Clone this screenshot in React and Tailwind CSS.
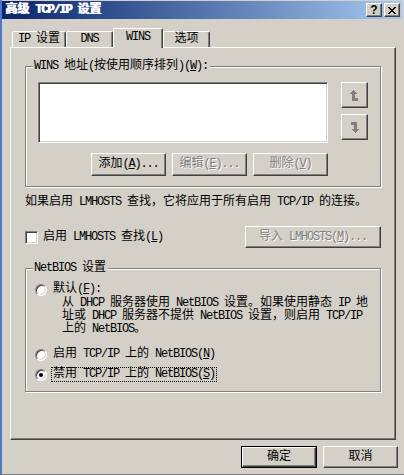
import React from "react";

// text run helper: ASCII runs get squeezed to the 6px half-width cell, "&x" underlines x
function T({ s }) {
  const segs = [];
  for (let i = 0; i < s.length; i++) {
    let c = s[i];
    let u = false;
    if (c === "&" && i + 1 < s.length) {
      c = s[++i];
      u = true;
    }
    const latin = c.charCodeAt(0) < 128;
    const last = segs[segs.length - 1];
    if (last && last.latin === latin && last.u === u) last.text += c;
    else segs.push({ text: c, latin, u });
  }
  return (
    <span className="whitespace-pre">
      {segs.map((g, k) => {
        const el = g.u ? <u className="underline-offset-1">{g.text}</u> : g.text;
        return g.latin ? (
          <span key={k} className="tracking-[-1.2px]">
            {el}
          </span>
        ) : (
          <span key={k}>{el}</span>
        );
      })}
    </span>
  );
}

const raised =
  "border border-t-white border-l-white border-r-[#404040] border-b-[#404040] shadow-[inset_-1px_-1px_0_#808080] bg-[#d4d0c8]";
const sunken =
  "border border-t-[#808080] border-l-[#808080] border-r-white border-b-white shadow-[inset_1px_1px_0_#404040,inset_-1px_-1px_0_#d4d0c8] bg-white";
const disabled = "text-[#808080] [text-shadow:1px_1px_0_#fff]";

function Button({ label, off, className = "" }) {
  return (
    <div
      className={`${raised} flex items-center justify-center whitespace-nowrap ${
        off ? disabled : "text-black"
      } ${className}`}
    >
      <T s={label} />
    </div>
  );
}

function Group({ label, className = "", children }) {
  return (
    <div
      className={`relative border border-[#808080] shadow-[1px_1px_0_#fff,inset_1px_1px_0_#fff] ${className}`}
    >
      <div className="absolute left-[7px] top-[-7px] bg-[#d4d0c8] pl-px pr-[2px] whitespace-nowrap">
        <T s={label} />
      </div>
      {children}
    </div>
  );
}

function Radio({ checked }) {
  return (
    <div className="w-[12px] h-[12px] shrink-0 rounded-full border border-t-[#808080] border-l-[#808080] border-r-white border-b-white shadow-[inset_1px_1px_0_#404040,inset_-1px_-1px_0_#d4d0c8] bg-white flex items-center justify-center">
      {checked && <div className="w-[4px] h-[4px] rounded-full bg-black" />}
    </div>
  );
}

function Arrow({ down }) {
  return (
    <svg
      width="9"
      height="11"
      viewBox="0 0 9 11"
      shapeRendering="crispEdges"
      className={down ? "rotate-180" : ""}
    >
      <g fill="#808080">
        <rect x="3" y="0" width="1" height="1" />
        <rect x="2" y="1" width="3" height="1" />
        <rect x="1" y="2" width="5" height="1" />
        <rect x="0" y="3" width="7" height="1" />
        <rect x="2" y="4" width="3" height="7" />
        <rect x="5" y="8" width="3" height="3" />
      </g>
    </svg>
  );
}

function Tab({ label, active, w }) {
  return (
    <div
      className={`${w} flex items-center justify-center rounded-t-[2px] border border-b-0 border-t-white border-l-white border-r-[#404040] shadow-[inset_-1px_0_0_#808080] bg-[#d4d0c8] ${
        active ? "h-[20px] -mb-px relative z-10 pb-[3px]" : "h-[16px]"
      }`}
    >
      <T s={label} />
    </div>
  );
}

export default function App() {
  return (
    <div className="w-[404px] h-[475px] overflow-hidden bg-[#d4d0c8] border-l-2 border-l-[#4f78c4] border-b border-b-[#808080] text-[12px] leading-[13px] text-black font-['Liberation_Mono','Noto_Sans_CJK_SC',monospace] flex flex-col">
      {/* title bar */}
      <div className="mt-px w-[400px] h-[18px] bg-linear-to-r from-[#0a246a] to-[#a6caf0] flex items-center pl-[3px] pr-[2px]">
        <div className="text-white font-bold whitespace-nowrap [text-shadow:1px_0_0_#fff]">
          <T s="高级 TCP/IP 设置" />
        </div>
        <div className="ml-auto flex gap-[2px]">
          <div className={`${raised} w-[16px] h-[14px] flex items-center justify-center font-bold text-[12px] font-['Liberation_Sans',sans-serif]`}>
            ?
          </div>
          <div className={`${raised} w-[16px] h-[14px] flex items-center justify-center`}>
            <svg width="8" height="7" viewBox="0 0 8 7" shapeRendering="crispEdges">
              <path d="M0 0h2v1h-2zM6 0h2v1h-2zM1 1h2v1h-2zM5 1h2v1h-2zM2 2h4v1h-4zM3 3h2v1h-2zM2 4h4v1h-4zM1 5h2v1h-2zM5 5h2v1h-2zM0 6h2v1h-2zM6 6h2v1h-2z" fill="#000" />
            </svg>
          </div>
        </div>
      </div>

      {/* tabs */}
      <div className="mt-[9px] ml-[10px] h-[19px] flex items-end">
        <Tab label="IP 设置" w="w-[54px]" />
        <Tab label="DNS" w="w-[47px]" />
        <Tab label="WINS" w="w-[50px]" active />
        <Tab label="选项" w="w-[47px]" />
      </div>

      {/* panel */}
      <div className="ml-[8px] w-[386px] h-[393px] border border-t-white border-l-white border-r-[#404040] border-b-[#404040] shadow-[inset_-1px_-1px_0_#808080] px-[14px] pt-[18px] flex flex-col whitespace-nowrap">
        <Group label="WINS 地址(按使用顺序排列)(&W):" className="pt-[15px] pl-[12px] pb-[10px]">
          <div className="flex gap-[13px]">
            <div className={`${sunken} w-[290px] h-[61px]`} />
            <div className="flex flex-col gap-[6px]">
              <div className={`${raised} w-[27px] h-[26px] flex items-center justify-center`}>
                <Arrow />
              </div>
              <div className={`${raised} w-[27px] h-[26px] flex items-center justify-center`}>
                <Arrow down />
              </div>
            </div>
          </div>
          <div className="w-[290px] mt-[10px] flex justify-end gap-[6px]">
            <Button label="添加(&A)..." className="w-[75px] h-[23px]" />
            <Button label="编辑(&E)..." off className="w-[75px] h-[23px]" />
            <Button label="删除(&V)" off className="w-[75px] h-[23px]" />
          </div>
        </Group>

        <div className="mt-[9px]">
          <T s="如果启用 LMHOSTS 查找，它将应用于所有启用 TCP/IP 的连接。" />
        </div>

        <div className="mt-[17px] flex items-center justify-between">
          <div className="flex items-center gap-[5px]">
            <div className={`${sunken} w-[13px] h-[13px]`} />
            <T s="启用 LMHOSTS 查找(&L)" />
          </div>
          <Button label="导入 LMHOSTS(&M)..." off className="w-[136px] h-[22px]" />
        </div>

        <Group label="NetBIOS 设置" className="mt-[20px] pt-[14px] pl-[9px] pb-[9px]">
          <div className="flex items-center gap-[6px]">
            <Radio />
            <T s="默认(&F):" />
          </div>
          <div className="ml-[27px] mt-px">
            <div>
              <T s="从 DHCP 服务器使用 NetBIOS 设置。如果使用静态 IP 地" />
            </div>
            <div>
              <T s="址或 DHCP 服务器不提供 NetBIOS 设置，则启用 TCP/IP" />
            </div>
            <div>
              <T s="上的 NetBIOS。" />
            </div>
          </div>
          <div className="mt-[12px] flex items-center gap-[6px]">
            <Radio />
            <T s="启用 TCP/IP 上的 NetBIOS(&N)" />
          </div>
          <div className="mt-[6px] flex items-center gap-[4px]">
            <Radio checked />
            <div className="border border-dotted border-black px-px">
              <T s="禁用 TCP/IP 上的 NetBIOS(&S)" />
            </div>
          </div>
        </Group>
      </div>

      {/* dialog buttons */}
      <div className="mt-[6px] pr-[6px] flex justify-end gap-[6px]">
        <div className="border border-black">
          <Button label="确定" className="w-[74px] h-[20px]" />
        </div>
        <Button label="取消" className="w-[75px] h-[22px]" />
      </div>
    </div>
  );
}
